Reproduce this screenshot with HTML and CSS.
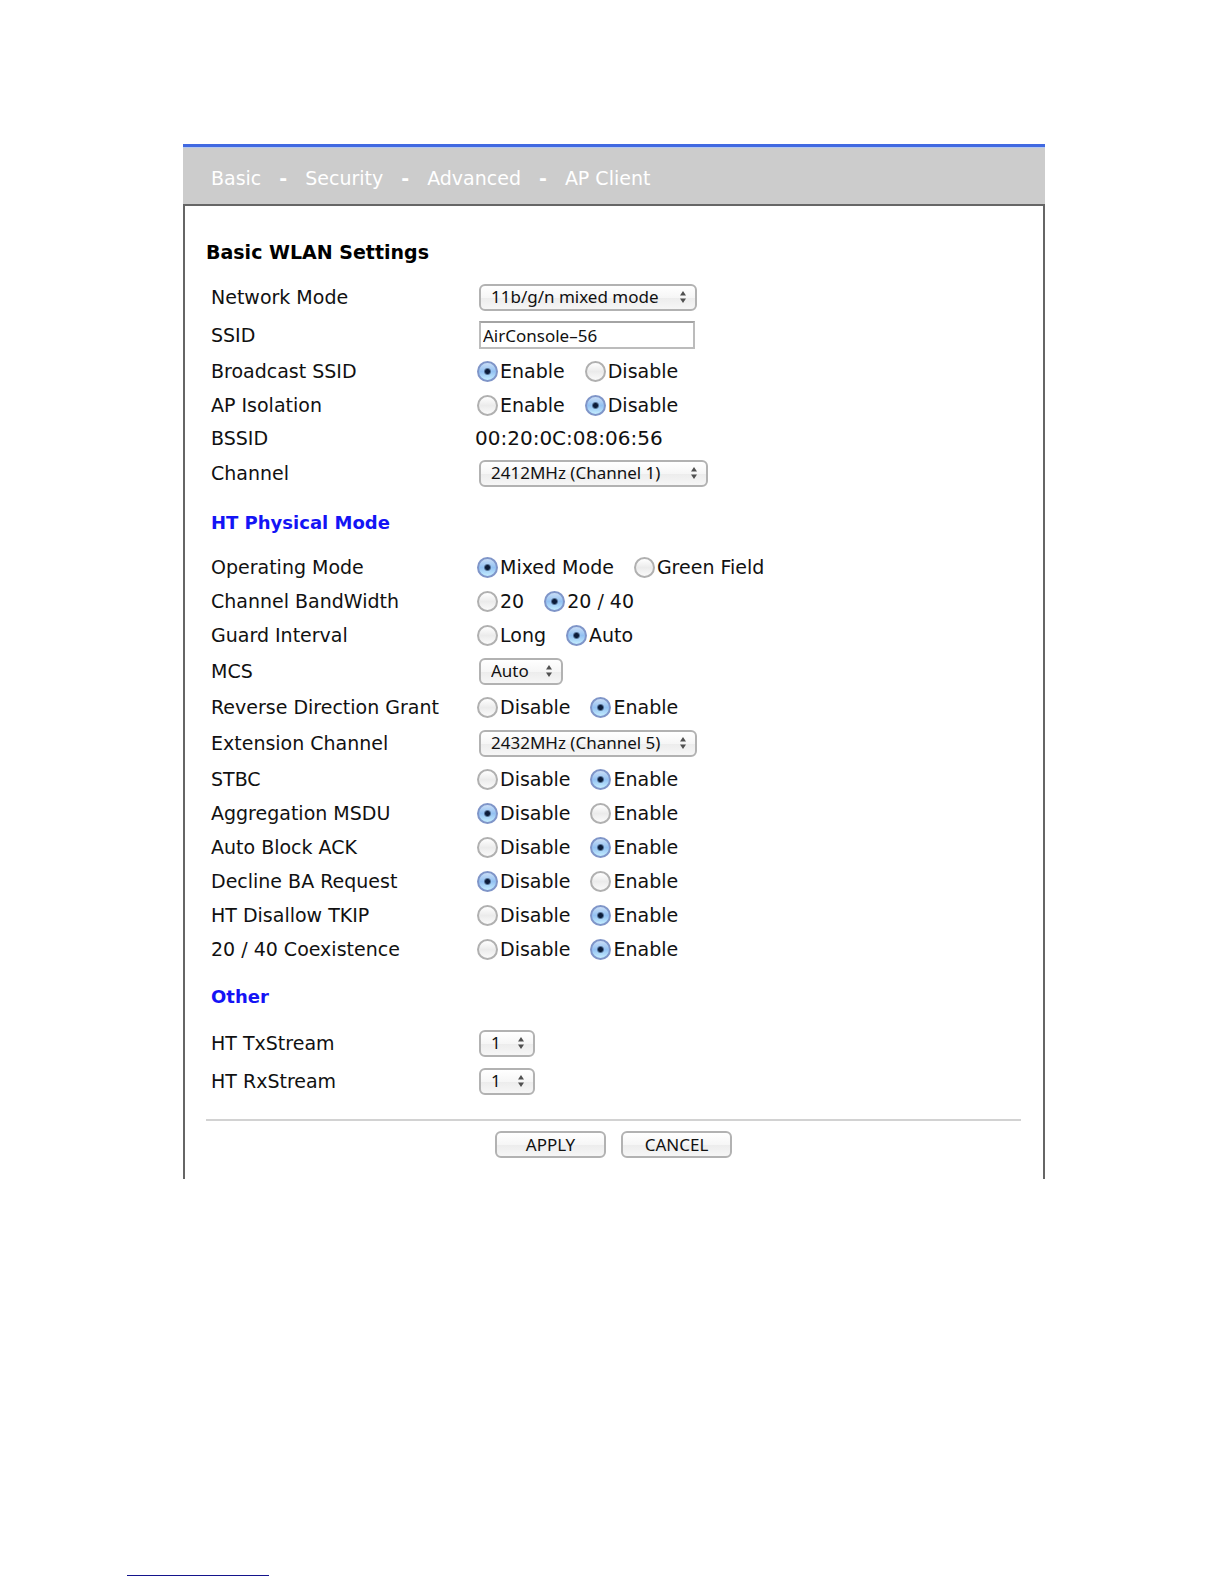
FILE: index.html
```html
<!DOCTYPE html>
<html lang="en">
<head>
<meta charset="utf-8">
<title>Basic WLAN Settings</title>
<link rel="stylesheet" href="styles.css">
</head>
<body>
<main class="panel">
  <nav class="tabs">
    <a href="#basic">Basic</a><b>-</b><a href="#security">Security</a><b>-</b><a href="#advanced">Advanced</a><b>-</b><a href="#client">AP Client</a>
  </nav>
  <form class="settings">
    <h1>Basic WLAN Settings</h1>

    <div class="row tall">
      <label for="mode">Network Mode</label>
      <div class="pick w-mode"><select id="mode"><option>11b/g/n mixed mode</option></select><svg viewBox="0 0 6 12"><path d="M3 0 6 4.5H0zM3 12 6 7.5H0z"/></svg></div>
    </div>
    <div class="row tall">
      <label for="ssid">SSID</label>
      <input class="text" id="ssid" type="text" value="AirConsole–56">
    </div>
    <div class="row" role="radiogroup" aria-labelledby="l-bcast">
      <span id="l-bcast">Broadcast SSID</span>
      <div class="choices"><label><input type="radio" name="bcast" checked>Enable</label><label><input type="radio" name="bcast">Disable</label></div>
    </div>
    <div class="row" role="radiogroup" aria-labelledby="l-iso">
      <span id="l-iso">AP Isolation</span>
      <div class="choices"><label><input type="radio" name="iso">Enable</label><label><input type="radio" name="iso" checked>Disable</label></div>
    </div>
    <div class="row short">
      <span>BSSID</span>
      <span class="address">00:20:0C:08:06:56</span>
    </div>
    <div class="row tall">
      <label for="channel">Channel</label>
      <div class="pick w-channel"><select id="channel"><option>2412MHz (Channel 1)</option></select><svg viewBox="0 0 6 12"><path d="M3 0 6 4.5H0zM3 12 6 7.5H0z"/></svg></div>
    </div>

    <h2>HT Physical Mode</h2>

    <div class="row" role="radiogroup" aria-labelledby="l-op">
      <span id="l-op">Operating Mode</span>
      <div class="choices"><label><input type="radio" name="op" checked>Mixed Mode</label><label><input type="radio" name="op">Green Field</label></div>
    </div>
    <div class="row" role="radiogroup" aria-labelledby="l-bw">
      <span id="l-bw">Channel BandWidth</span>
      <div class="choices"><label><input type="radio" name="bw">20</label><label><input type="radio" name="bw" checked>20 / 40</label></div>
    </div>
    <div class="row" role="radiogroup" aria-labelledby="l-gi">
      <span id="l-gi">Guard Interval</span>
      <div class="choices"><label><input type="radio" name="gi">Long</label><label><input type="radio" name="gi" checked>Auto</label></div>
    </div>
    <div class="row tall">
      <label for="mcs">MCS</label>
      <div class="pick w-mcs"><select id="mcs"><option>Auto</option></select><svg viewBox="0 0 6 12"><path d="M3 0 6 4.5H0zM3 12 6 7.5H0z"/></svg></div>
    </div>
    <div class="row" role="radiogroup" aria-labelledby="l-rdg">
      <span id="l-rdg">Reverse Direction Grant</span>
      <div class="choices"><label><input type="radio" name="rdg">Disable</label><label><input type="radio" name="rdg" checked>Enable</label></div>
    </div>
    <div class="row tall">
      <label for="ext">Extension Channel</label>
      <div class="pick w-mode"><select id="ext"><option>2432MHz (Channel 5)</option></select><svg viewBox="0 0 6 12"><path d="M3 0 6 4.5H0zM3 12 6 7.5H0z"/></svg></div>
    </div>
    <div class="row" role="radiogroup" aria-labelledby="l-stbc">
      <span id="l-stbc">STBC</span>
      <div class="choices"><label><input type="radio" name="stbc">Disable</label><label><input type="radio" name="stbc" checked>Enable</label></div>
    </div>
    <div class="row" role="radiogroup" aria-labelledby="l-msdu">
      <span id="l-msdu">Aggregation MSDU</span>
      <div class="choices"><label><input type="radio" name="msdu" checked>Disable</label><label><input type="radio" name="msdu">Enable</label></div>
    </div>
    <div class="row" role="radiogroup" aria-labelledby="l-ack">
      <span id="l-ack">Auto Block ACK</span>
      <div class="choices"><label><input type="radio" name="ack">Disable</label><label><input type="radio" name="ack" checked>Enable</label></div>
    </div>
    <div class="row" role="radiogroup" aria-labelledby="l-ba">
      <span id="l-ba">Decline BA Request</span>
      <div class="choices"><label><input type="radio" name="ba" checked>Disable</label><label><input type="radio" name="ba">Enable</label></div>
    </div>
    <div class="row" role="radiogroup" aria-labelledby="l-tkip">
      <span id="l-tkip">HT Disallow TKIP</span>
      <div class="choices"><label><input type="radio" name="tkip">Disable</label><label><input type="radio" name="tkip" checked>Enable</label></div>
    </div>
    <div class="row" role="radiogroup" aria-labelledby="l-coex">
      <span id="l-coex">20 / 40 Coexistence</span>
      <div class="choices"><label><input type="radio" name="coex">Disable</label><label><input type="radio" name="coex" checked>Enable</label></div>
    </div>

    <h2>Other</h2>

    <div class="row tall">
      <label for="tx">HT TxStream</label>
      <div class="pick w-stream"><select id="tx"><option>1</option></select><svg viewBox="0 0 6 12"><path d="M3 0 6 4.5H0zM3 12 6 7.5H0z"/></svg></div>
    </div>
    <div class="row tall">
      <label for="rx">HT RxStream</label>
      <div class="pick w-stream"><select id="rx"><option>1</option></select><svg viewBox="0 0 6 12"><path d="M3 0 6 4.5H0zM3 12 6 7.5H0z"/></svg></div>
    </div>

    <div class="actions">
      <button type="submit">APPLY</button>
      <button type="reset">CANCEL</button>
    </div>
  </form>
</main>
<footer><hr></footer>
</body>
</html>
```
FILE: styles.css
```css
* { box-sizing: border-box; }

body {
  margin: 0;
  min-height: 100vh;
  padding: 144px 179px 8px 183px;
  display: flex;
  flex-direction: column;
  background: #fff;
  color: #111;
  font: 19px/24px "DejaVu Sans", Verdana, sans-serif;
}

.tabs {
  display: flex;
  align-items: center;
  gap: 18px;
  height: 60px;
  padding: 5px 28px 0;
  border-top: 3px solid #4169e1;
  background: #ccc;
  box-shadow: inset 0 1px #b4c8ee;
  color: #fff;
}
.tabs a { color: inherit; text-decoration: none; }

.settings {
  border: 2px solid #666;
  border-bottom: 0;
  padding: 34px 22px 21px 21px;
}

h1 {
  margin: 0 0 14px;
  font-size: 19px;
  line-height: 24px;
  color: #000;
}
h2 {
  margin: 0;
  padding: 19px 5px 15px;
  font-size: 18px;
  line-height: 24px;
  color: #1414f5;
}

.row {
  display: grid;
  grid-template-columns: 264px 1fr;
  align-items: center;
  min-height: 34px;
  padding-left: 5px;
}
.row.tall { min-height: 38px; }
.row.short { min-height: 32px; }
.address { font-size: 20px; }

.choices { display: flex; gap: 20px; padding-left: 2px; }
.choices label { display: flex; align-items: center; gap: 2px; }

input[type="radio"] {
  appearance: none;
  width: 21px;
  height: 21px;
  margin: 0;
  border: 2px solid #b0b0b0;
  border-radius: 50%;
  background: linear-gradient(#fff, #ebebeb 50%, #fafafa);
}
input[type="radio"]:checked {
  border-color: #7f95c8;
  background:
    radial-gradient(circle, #0c1c38 2px, transparent 4px),
    linear-gradient(#c9def6, #93c1f2 50%, #c4edff);
}

.pick {
  display: grid;
  align-items: center;
  height: 27px;
  margin-left: 4px;
}
.pick > * { grid-area: 1 / 1; }
.pick svg {
  width: 6px;
  height: 12px;
  margin-right: 11px;
  justify-self: end;
  fill: #505050;
  pointer-events: none;
}
.w-mode { width: 218px; }
.w-channel { width: 229px; }
.w-mcs { width: 84px; }
.w-stream { width: 56px; }

select, button, .text {
  margin: 0;
  color: #111;
  font: 17px/20px "Noto Sans", "Lucida Grande", sans-serif;
}
select, button {
  appearance: none;
  height: 27px;
  border: 2px solid #b2b2b2;
  border-radius: 6px;
  background: linear-gradient(#fff, #f6f6f6 50%, #ececec 51%, #f6f6f6);
}
select { width: 100%; padding: 0 10px; }
button { width: 111px; padding: 0; }

.text {
  width: 216px;
  height: 28px;
  margin-left: 4px;
  padding: 0 2px;
  border: 2px solid #bcbcbc;
  border-top-color: #a4a4a4;
  background: #fff;
}

.actions {
  display: flex;
  justify-content: center;
  gap: 15px;
  margin-top: 19px;
  padding-top: 10px;
  border-top: 2px solid #d2d2d2;
}

footer { margin: auto 0 0 -56px; }
footer hr {
  width: 142px;
  margin: 0;
  border: 0;
  border-top: 1px solid #14148c;
}
```
